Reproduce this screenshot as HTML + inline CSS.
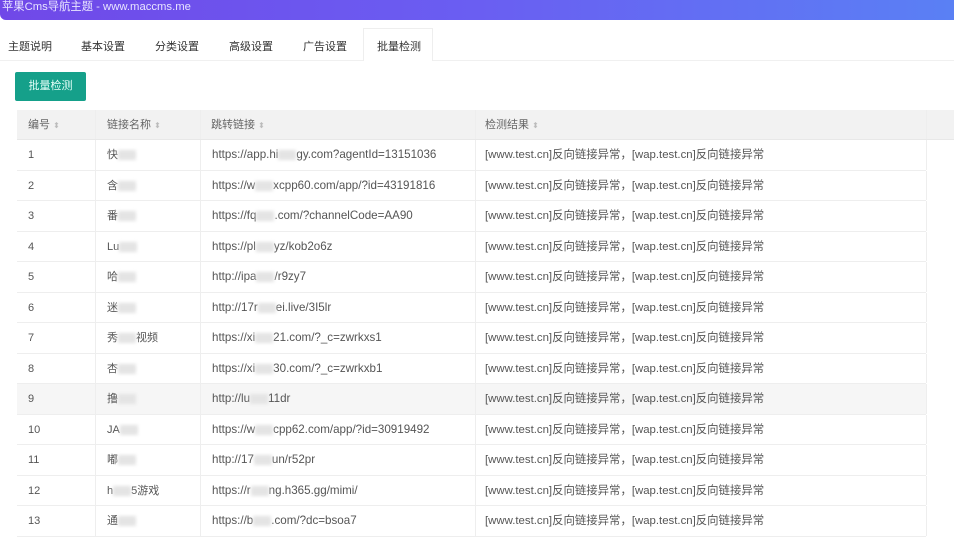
<!DOCTYPE html>
<html><head><meta charset="utf-8"><style>
body{margin:0;width:954px;height:534px;overflow:hidden;background:#fff;font-family:"Liberation Sans","Noto Sans CJK SC",sans-serif;color:#555;font-size:11px;position:relative}
.hdr{position:absolute;left:0;top:0;width:954px;height:20px;background:linear-gradient(90deg,#7048e8 0%,#6a5ef2 50%,#5a80f4 100%);border-bottom-left-radius:6px;color:#e8e4ff;font-size:11.3px;line-height:14px;padding-left:2px;box-sizing:border-box}
.tabs{position:absolute;top:28px;left:0;width:954px;height:32px;border-bottom:1px solid #f0f0f0}
.tab{position:absolute;top:10px;font-size:11px;color:#333}
.act{position:absolute;left:363px;top:0;width:70px;height:33px;border:1px solid #eee;border-bottom:none;background:#fff;box-sizing:border-box}
.btn{position:absolute;left:15px;top:72px;width:71px;height:29px;background:#15a08a;border-radius:2px;color:#e6fff9;font-size:11px;text-align:center;line-height:29px}
.th{position:absolute;left:17px;top:110px;width:937px;height:30px;background:#f2f2f2;border-bottom:1px solid #e8e8e8;box-sizing:border-box}
.row{position:absolute;left:17px;width:909px;border-bottom:1px solid #eee;background:#fff;box-sizing:border-box}
.c{position:absolute;top:0;line-height:30px;white-space:nowrap}
.v{position:absolute;top:0;height:100%;border-left:1px solid #eee}
.s{color:#bbb;font-size:8px}
.b{display:inline-block;width:18px;height:10px;background:#e4e4e4;vertical-align:middle;filter:blur(1.5px)}
.r{font-size:11.4px}
</style></head><body>
<div class="hdr">苹果Cms导航主题 - www.maccms.me</div>
<div class="tabs">
<div class="act"></div>
<span class="tab" style="left:8px">主题说明</span>
<span class="tab" style="left:81px">基本设置</span>
<span class="tab" style="left:155px">分类设置</span>
<span class="tab" style="left:229px">高级设置</span>
<span class="tab" style="left:303px">广告设置</span>
<span class="tab" style="left:377px">批量检测</span>
</div>
<div class="btn">批量检测</div>
<div class="th">
<span class="c" style="left:11px;color:#666">编号 <span class="s">⬍</span></span>
<span class="c" style="left:90px;color:#666">链接名称 <span class="s">⬍</span></span>
<span class="c" style="left:194px;color:#666">跳转链接 <span class="s">⬍</span></span>
<span class="c" style="left:468px;color:#666">检测结果 <span class="s">⬍</span></span>
<div class="v" style="left:78px"></div><div class="v" style="left:183px"></div><div class="v" style="left:458px"></div><div class="v" style="left:909px"></div>
</div>
<div id="rows"></div>
<script>
var d=[["1","快<b class=b></b>","https://app.hi<b class=b></b>gy.com?agentId=13151036"],
["2","含<b class=b></b>","https://w<b class=b></b>xcpp60.com/app/?id=43191816"],
["3","番<b class=b></b>","https://fq<b class=b></b>.com/?channelCode=AA90"],
["4","Lu<b class=b></b>","https://pl<b class=b></b>yz/kob2o6z"],
["5","哈<b class=b></b>","http://ipa<b class=b></b>/r9zy7"],
["6","迷<b class=b></b>","http://17r<b class=b></b>ei.live/3I5lr"],
["7","秀<b class=b></b>视频","https://xi<b class=b></b>21.com/?_c=zwrkxs1"],
["8","杏<b class=b></b>","https://xi<b class=b></b>30.com/?_c=zwrkxb1"],
["9","撸<b class=b></b>","http://lu<b class=b></b>11dr"],
["10","JA<b class=b></b>","https://w<b class=b></b>cpp62.com/app/?id=30919492"],
["11","嘟<b class=b></b>","http://17<b class=b></b>un/r52pr"],
["12","h<b class=b></b>5游戏","https://r<b class=b></b>ng.h365.gg/mimi/"],
["13","通<b class=b></b>","https://b<b class=b></b>.com/?dc=bsoa7"]];
var h="";
d.forEach(function(r,i){var t=Math.round(140+i*30.5),n=Math.round(140+(i+1)*30.5);
h+='<div class="row" style="top:'+t+'px;height:'+(n-t)+'px;'+(i==8?'background:#f6f6f6':'')+'"><span class="c" style="left:11px">'+r[0]+'</span><span class="c" style="left:90px">'+r[1]+'</span><span class="c" style="left:195px;font-size:11.6px">'+r[2]+'</span><span class="c r" style="left:468px">[www.test.cn]反向链接异常，[wap.test.cn]反向链接异常</span><div class="v" style="left:78px"></div><div class="v" style="left:183px"></div><div class="v" style="left:458px"></div><div class="v" style="left:909px"></div></div>';});
document.getElementById("rows").innerHTML=h;
</script>
</body></html>
